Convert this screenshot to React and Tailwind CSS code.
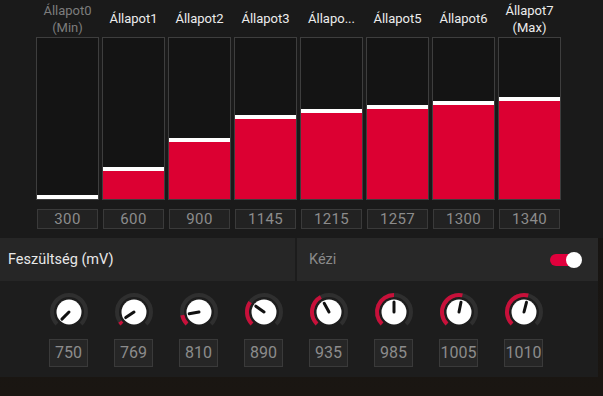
import React from 'react';

const states = [
  { label: ['Állapot0', '(Min)'], value: 300, dim: true },
  { label: ['Állapot1'], value: 600 },
  { label: ['Állapot2'], value: 900 },
  { label: ['Állapot3'], value: 1145 },
  { label: ['Állapo...'], value: 1215 },
  { label: ['Állapot5'], value: 1257 },
  { label: ['Állapot6'], value: 1300 },
  { label: ['Állapot7', '(Max)'], value: 1340 },
];

const voltages = [750, 769, 810, 890, 935, 985, 1005, 1010];

// polar point, angle in degrees clockwise from 12 o'clock
const pt = (a, r) => {
  const rad = (a * Math.PI) / 180;
  return [20 + r * Math.sin(rad), 20 - r * Math.cos(rad)];
};

const arc = (from, to, r) => {
  const [x1, y1] = pt(from, r);
  const [x2, y2] = pt(to, r);
  const large = to - from > 180 ? 1 : 0;
  return `M ${x1} ${y1} A ${r} ${r} 0 ${large} 1 ${x2} ${y2}`;
};

function Knob({ value }) {
  const angle = -135 + (value - 750) * (135 / 235);
  const [px, py] = pt(angle, 10);
  return (
    <svg width="40" height="40" viewBox="0 0 40 40">
      <path d={arc(-135, 135, 17)} fill="none" stroke="#2f2f2f" strokeWidth="4" />
      {angle > -134 && (
        <path d={arc(-135, angle, 17)} fill="none" stroke="#c8103a" strokeWidth="4" />
      )}
      <circle cx="20" cy="20" r="12.5" fill="#ffffff" />
      <line x1="20" y1="20" x2={px} y2={py} stroke="#111" strokeWidth="3" strokeLinecap="round" />
    </svg>
  );
}

function StateBar({ state }) {
  const fill = 4 + ((state.value - 300) / 1040) * 98;
  return (
    <div className="w-[63px] flex flex-col">
      <div
        className={`h-[37px] flex flex-col items-center justify-center text-[13px] leading-[17px] ${
          state.dim ? 'text-[#7d7d7d]' : 'text-[#ececec]'
        }`}
      >
        {state.label.map((l) => (
          <span key={l}>{l}</span>
        ))}
      </div>
      <div className="h-[163px] border border-[#3e3e3e] bg-[#141414] flex flex-col justify-end">
        <div className="flex flex-col" style={{ height: fill }}>
          <div className="h-[4px] bg-white" />
          <div className="flex-1 bg-[#dc0032]" />
        </div>
      </div>
      <div className="mt-[9px] mx-[1px] h-[20px] border border-[#3a3a3a] bg-[#222222] flex items-center justify-center text-[15px] text-[#8c8c8c] tracking-wide">
        {state.value}
      </div>
    </div>
  );
}

export default function App() {
  return (
    <div
      className="w-[603px] h-[396px] overflow-hidden bg-gradient-to-b from-[#141414] to-[#1a1612] flex flex-col"
      style={{ fontFamily: 'Roboto, "Noto Sans", sans-serif' }}
    >
      {/* State bars */}
      <div className="h-[238px] shrink-0 bg-[#1a1a1a] pl-[36px] flex gap-[3px]">
        {states.map((s) => (
          <StateBar key={s.label[0]} state={s} />
        ))}
      </div>

      {/* Voltage header */}
      <div className="h-[43px] w-[598px] shrink-0 flex">
        <div className="w-[295px] bg-[#262626] flex items-center pl-[8px] text-[14.5px] text-[#e8e8e8]">
          Feszültség (mV)
        </div>
        <div className="w-[2px] bg-[#1c1c1c]" />
        <div className="flex-1 bg-[#282828] flex items-center justify-between pl-[12px] pr-[16px]">
          <span className="text-[14.5px] text-[#8a8a8a]">Kézi</span>
          <div className="relative w-[32px] h-[16px] flex items-center">
            <div className="w-[26px] h-[12px] rounded-full bg-[#e0003c]" />
            <div className="absolute right-0 top-0 w-[16px] h-[16px] rounded-full bg-white" />
          </div>
        </div>
      </div>

      {/* Knobs */}
      <div className="h-[96px] w-[598px] shrink-0 bg-[#1d1d1d] pl-[36px] pt-[11px] flex">
        {voltages.map((v) => (
          <div key={v} className="w-[65px] flex flex-col items-center">
            <Knob value={v} />
            <div className="mt-[7px] w-[39px] h-[28px] border border-[#3a3a3a] bg-[#262626] flex items-center justify-center text-[16px] text-[#8c8c8c]">
              {v}
            </div>
          </div>
        ))}
      </div>
    </div>
  );
}
